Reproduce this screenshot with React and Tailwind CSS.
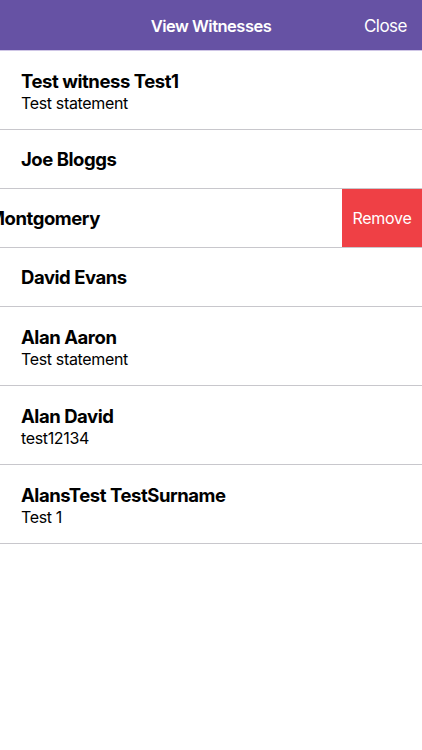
import React from 'react'

const witnesses = [
  { name: 'Test witness Test1', statement: 'Test statement' },
  { name: 'Joe Bloggs' },
  { name: 'Bob Montgomery', swiped: true },
  { name: 'David Evans' },
  { name: 'Alan Aaron', statement: 'Test statement' },
  { name: 'Alan David', statement: 'test12134' },
  { name: 'AlansTest TestSurname', statement: 'Test 1' },
]

const WitnessRow = ({ item }) => {
  const tall = !!item.statement
  return (
    <div className="relative overflow-hidden border-b border-[#c8c7cc] bg-white">
      <div
        className={`flex flex-col justify-center px-[21px] ${tall ? 'h-[78px] pt-[2px]' : 'h-[58px] pt-[1px]'} ${item.swiped ? '-translate-x-[71px]' : ''}`}
      >
        <div className="text-[18.5px] font-bold leading-[23px] tracking-[-0.45px] text-black">{item.name}</div>
        {item.statement && (
          <div className="text-[16px] leading-[20px] tracking-[-0.35px] text-black">{item.statement}</div>
        )}
      </div>
      {item.swiped && (
        <div className="absolute right-0 top-0 bottom-0 flex w-[80px] items-center justify-center bg-[#ef4045] text-[16px] tracking-[-0.3px] text-white">
          Remove
        </div>
      )}
    </div>
  )
}

const App = () => {
  return (
    <div className="min-h-[750px] w-full bg-white font-['Inter','Liberation_Sans',sans-serif]">
      {/* Header */}
      <div className="relative flex h-[51px] items-center justify-center border-b border-[#cfc6e6] bg-[#6652a4] pt-[3px]">
        <span className="text-[16.5px] font-semibold tracking-[-0.5px] text-white">View Witnesses</span>
        <span className="absolute right-[15px] text-[17px] tracking-[-0.5px] text-white">Close</span>
      </div>

      {/* List */}
      <div>
        {witnesses.map((item) => (
          <WitnessRow key={item.name} item={item} />
        ))}
      </div>
    </div>
  )
}

export default App
